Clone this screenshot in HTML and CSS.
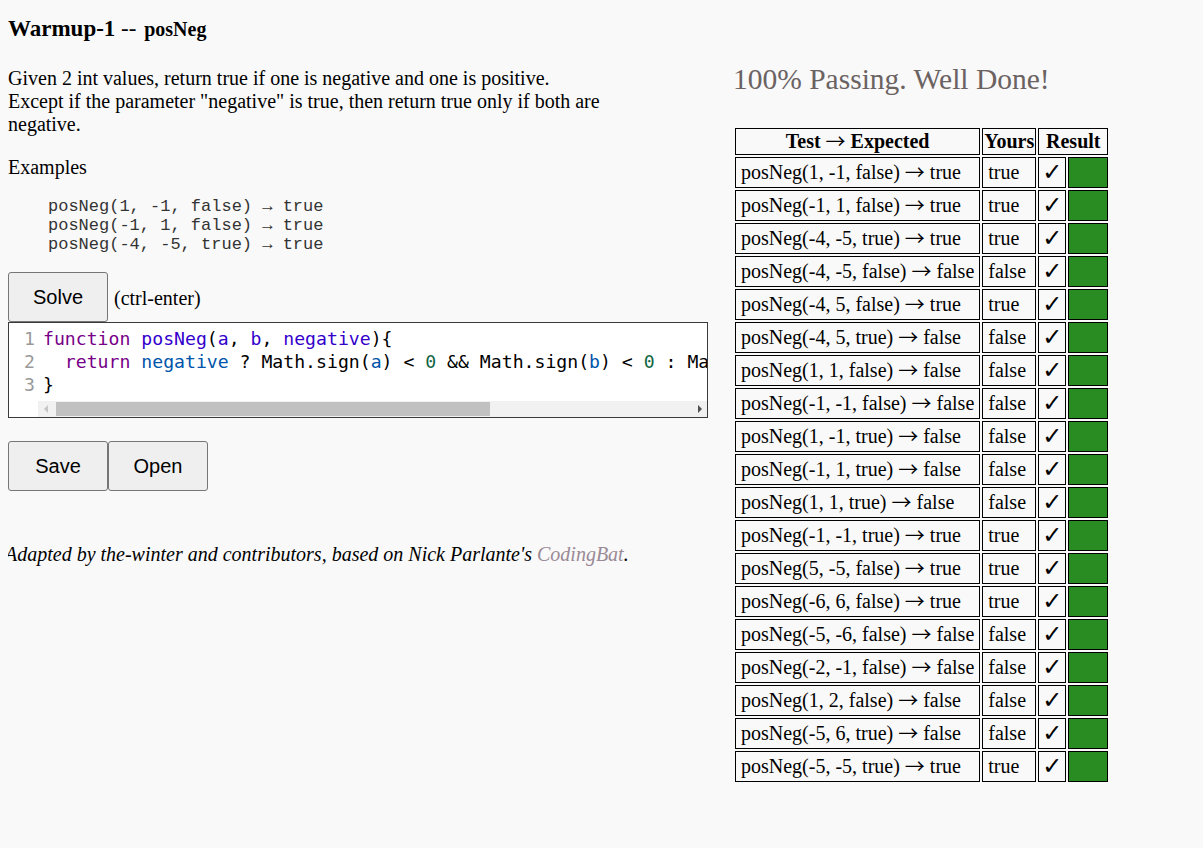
FILE: index.html
```html
<!DOCTYPE html>
<html>
<head>
<meta charset="utf-8">
<title>Warmup-1 -- posNeg</title>
<link rel="stylesheet" href="styles.css">
</head>
<body>
<div class="page">
  <div class="left">
    <div class="title"><span class="group">Warmup-1</span><span class="sep"> -- </span><span class="name">posNeg</span></div>
    <p class="desc">Given 2 int values, return true if one is negative and one is positive.<br>Except if the parameter "negative" is true, then return true only if both are negative.</p>
    <p class="examples-label">Examples</p>
    <pre class="examples">posNeg(1, -1, false) → true
posNeg(-1, 1, false) → true
posNeg(-4, -5, true) → true</pre>
    <div class="solve-row">
      <button class="btn">Solve</button>
      <span class="hint">(ctrl-enter)</span>
    </div>
    <div class="editor">
      <div class="editor-body">
        <div class="gutter">
          <div class="ln">1</div>
          <div class="ln">2</div>
          <div class="ln">3</div>
        </div>
        <div class="code"><div class="cl"><span class="kw">function</span> <span class="def">posNeg</span>(<span class="def">a</span>, <span class="def">b</span>, <span class="def">negative</span>){</div><div class="cl">  <span class="kw">return</span> <span class="v2">negative</span> ? Math.sign(<span class="v2">a</span>) &lt; <span class="num">0</span> &amp;&amp; Math.sign(<span class="v2">b</span>) &lt; <span class="num">0</span> : Ma</div><div class="cl">}</div></div>
      </div>
      <div class="hscroll">
        <div class="arrow arrow-left"></div>
        <div class="track"><div class="thumb"></div></div>
        <div class="arrow arrow-right"></div>
      </div>
    </div>
    <div class="actions">
      <button class="btn">Save</button><button class="btn">Open</button>
    </div>
    <p class="footer">Adapted by the-winter and contributors, based on Nick Parlante's <a href="#">CodingBat</a>.</p>
  </div>
  <div class="right">
    <h2 class="status">100% Passing. Well Done!</h2>
    <table class="results">
      <thead>
        <tr><th>Test <span class="arr">→</span> Expected</th><th>Yours</th><th colspan="2">Result</th></tr>
      </thead>
      <tbody>
        <tr><td>posNeg(1, -1, false) <span class="arr">→</span> true</td><td>true</td><td class="check">✓</td><td class="pass"></td></tr>
        <tr><td>posNeg(-1, 1, false) <span class="arr">→</span> true</td><td>true</td><td class="check">✓</td><td class="pass"></td></tr>
        <tr><td>posNeg(-4, -5, true) <span class="arr">→</span> true</td><td>true</td><td class="check">✓</td><td class="pass"></td></tr>
        <tr><td>posNeg(-4, -5, false) <span class="arr">→</span> false</td><td>false</td><td class="check">✓</td><td class="pass"></td></tr>
        <tr><td>posNeg(-4, 5, false) <span class="arr">→</span> true</td><td>true</td><td class="check">✓</td><td class="pass"></td></tr>
        <tr><td>posNeg(-4, 5, true) <span class="arr">→</span> false</td><td>false</td><td class="check">✓</td><td class="pass"></td></tr>
        <tr><td>posNeg(1, 1, false) <span class="arr">→</span> false</td><td>false</td><td class="check">✓</td><td class="pass"></td></tr>
        <tr><td>posNeg(-1, -1, false) <span class="arr">→</span> false</td><td>false</td><td class="check">✓</td><td class="pass"></td></tr>
        <tr><td>posNeg(1, -1, true) <span class="arr">→</span> false</td><td>false</td><td class="check">✓</td><td class="pass"></td></tr>
        <tr><td>posNeg(-1, 1, true) <span class="arr">→</span> false</td><td>false</td><td class="check">✓</td><td class="pass"></td></tr>
        <tr><td>posNeg(1, 1, true) <span class="arr">→</span> false</td><td>false</td><td class="check">✓</td><td class="pass"></td></tr>
        <tr><td>posNeg(-1, -1, true) <span class="arr">→</span> true</td><td>true</td><td class="check">✓</td><td class="pass"></td></tr>
        <tr><td>posNeg(5, -5, false) <span class="arr">→</span> true</td><td>true</td><td class="check">✓</td><td class="pass"></td></tr>
        <tr><td>posNeg(-6, 6, false) <span class="arr">→</span> true</td><td>true</td><td class="check">✓</td><td class="pass"></td></tr>
        <tr><td>posNeg(-5, -6, false) <span class="arr">→</span> false</td><td>false</td><td class="check">✓</td><td class="pass"></td></tr>
        <tr><td>posNeg(-2, -1, false) <span class="arr">→</span> false</td><td>false</td><td class="check">✓</td><td class="pass"></td></tr>
        <tr><td>posNeg(1, 2, false) <span class="arr">→</span> false</td><td>false</td><td class="check">✓</td><td class="pass"></td></tr>
        <tr><td>posNeg(-5, 6, true) <span class="arr">→</span> false</td><td>false</td><td class="check">✓</td><td class="pass"></td></tr>
        <tr><td>posNeg(-5, -5, true) <span class="arr">→</span> true</td><td>true</td><td class="check">✓</td><td class="pass"></td></tr>
      </tbody>
    </table>
  </div>
</div>
</body>
</html>
```
FILE: styles.css
```css
body {
  margin: 8px;
  background: #f9f9f9;
  font-family: "Liberation Serif", "Times New Roman", serif;
  font-size: 20px;
  color: #000;
}

.page {
  display: flex;
  align-items: flex-start;
  gap: 25px;
}

.left {
  width: 700px;
  flex: none;
}

.title {
  margin: 8px 0 0;
  font-size: 23px;
  font-weight: bold;
  line-height: 26px;
}

.title .sep {
  font-weight: normal;
}

.title .name {
  font-size: 20px;
  margin-left: 2px;
}

.desc {
  margin: 25px 0 0;
  width: 620px;
  line-height: 23px;
}

.examples-label {
  margin: 20px 0 0;
  line-height: 23px;
}

.examples {
  margin: 18px 0 0 40px;
  font-family: "Liberation Mono", "Courier New", monospace;
  font-size: 17px;
  line-height: 19px;
  color: #333;
}

.solve-row {
  margin-top: 18px;
  display: flex;
  align-items: center;
}

.btn {
  width: 100px;
  height: 50px;
  padding: 0;
  margin: 0;
  font-family: "Liberation Sans", Arial, sans-serif;
  font-size: 20px;
  color: #000;
  background: #efefef;
  border: 1px solid #767676;
  border-radius: 3px;
}

.hint {
  margin-left: 6px;
  padding-top: 3px;
  line-height: 23px;
}

.editor {
  border: 1px solid #3a3a3a;
  background: #fff;
  overflow: hidden;
}

.editor-body {
  display: flex;
  font-family: "DejaVu Sans Mono", monospace;
  font-size: 18.15px;
  line-height: 23px;
}

.gutter {
  width: 29px;
  flex: none;
  box-sizing: border-box;
  padding: 4px 3px 5px 0;
  text-align: right;
  color: #999;
}

.code {
  flex: 1;
  min-width: 0;
  padding: 4px 0 5px 5px;
  white-space: pre;
  overflow: hidden;
  color: #000;
}

.kw { color: #708; }
.def { color: #30c; }
.v2 { color: #05a; }
.num { color: #164; }

.hscroll {
  margin-left: 29px;
  height: 16px;
  background: #f1f1f1;
  display: flex;
  align-items: center;
}

.arrow {
  width: 15px;
  height: 16px;
  flex: none;
  position: relative;
}

.arrow::after {
  content: "";
  position: absolute;
  top: 4px;
  width: 0;
  height: 0;
  border-top: 4px solid transparent;
  border-bottom: 4px solid transparent;
}

.arrow-left::after {
  left: 6px;
  border-right: 4px solid #c6c6c6;
}

.arrow-right::after {
  left: 6px;
  border-left: 4px solid #505050;
}

.track {
  flex: 1;
  height: 16px;
  display: flex;
  align-items: center;
}

.thumb {
  margin-left: 3px;
  width: 434px;
  height: 14px;
  background: #c1c1c1;
}

.actions {
  margin-top: 23px;
  display: flex;
}

.footer {
  margin: 52px 0 0 -3px;
  font-style: italic;
  line-height: 23px;
}

.footer a {
  color: #9a8a96;
  text-decoration: none;
}

.right {
  flex: none;
}

.status {
  margin: 54px 0 0;
  font-size: 29.5px;
  font-weight: normal;
  line-height: 34px;
  color: #6b6262;
}

.results {
  margin-top: 30px;
  border-collapse: separate;
  border-spacing: 2px;
}

.results th,
.results td {
  border: 1px solid #000;
  font-size: 20px;
  line-height: 23px;
}

.results th {
  padding: 1px 1px;
  text-align: center;
}

.results td {
  padding: 3px 5px;
  text-align: left;
}

.arr {
  font-family: "Noto Sans CJK JP", "DejaVu Serif", sans-serif;
  font-weight: normal;
  line-height: 0;
  vertical-align: -1px;
}

.results td.check {
  width: 26px;
  padding: 3px 0;
  text-align: center;
  font-family: "DejaVu Sans", sans-serif;
  font-size: 24px;
}

.results td.pass {
  width: 28px;
  background: #298c22;
}
```
